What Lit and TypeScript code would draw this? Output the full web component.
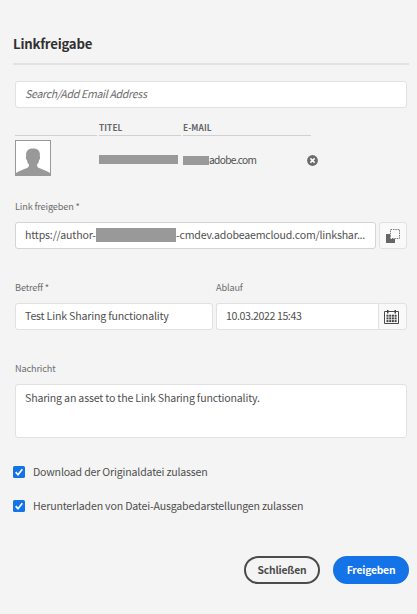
import { LitElement, html, css, svg } from "lit";
import { customElement } from "lit/decorators.js";

const dots = [0, 1, 2].flatMap((r) => [0, 1, 2, 3].map((c) => svg`<rect x=${2.5 + c * 2.7} y=${4.7 + r * 2.7} width="2" height="2"/>`));

@customElement("check-row")
class CheckRow extends LitElement {
  static styles = css`
    :host { display: flex; align-items: center; height: 34px; gap: 8px; }
    svg { display: block; width: 12px; height: 12px; flex: none; }
  `;
  render() {
    return html`<svg viewBox="0 0 12 12"><rect width="12" height="12" rx="1.6" fill="#1473e6"/><path d="M2.7 6.1 5 8.7 9.3 3.3" fill="none" stroke="#fff" stroke-width="1.7"/></svg><slot></slot>`;
  }
}

@customElement("app-root")
class AppRoot extends LitElement {
  static styles = css`
    :host {
      display: block; box-sizing: border-box; width: 417px; height: 614px; padding: 34px 8px 0 13px;
      background: #f4f4f4; color: #4f4f4f; overflow: hidden; white-space: nowrap;
      font: 10.6px/20px "Noto Sans CJK SC", "Noto Sans", sans-serif; letter-spacing: -0.18px;
    }
    * { box-sizing: border-box; }
    svg { display: block; }
    h1 { margin: 0; height: 31px; border-bottom: 2px solid #e2e2e2; font-size: 13.2px; line-height: 19px; font-weight: 700; color: #303030; letter-spacing: -0.22px; }
    .form { padding: 0 2px; }
    .field { height: 27px; display: flex; align-items: center; background: #fff; border: 1px solid #e1e1e1; border-radius: 3px; padding: 0 9px 1px; }
    .search { margin-top: 16px; font-style: italic; color: #6e6e6e; letter-spacing: -0.31px; }
    .people { display: grid; grid-template-columns: 82px 82px 128px; column-gap: 2px; margin-top: 9px; }
    .th { height: 19px; border-bottom: 1px solid #d0d0d0; font-size: 8.3px; font-weight: 700; line-height: 20px; color: #666; letter-spacing: 0.1px; }
    .person { display: flex; height: 36px; margin-top: 4px; align-items: center; }
    .avatar { width: 36px; height: 36px; }
    .mask { background: #999; flex: none; }
    .name { width: 79px; height: 9px; margin: 2px 0 0 48px; }
    .mail { display: flex; align-items: center; margin: 4px 0 0 5px; width: 124px; font-size: 10.2px; letter-spacing: -0.7px; }
    .mail .mask { width: 26px; height: 9px; }
    .remove { width: 11px; height: 11px; margin-top: 5px; }
    .label { font-size: 9.2px; line-height: 18px; height: 18px; color: #6e6e6e; letter-spacing: -0.16px; }
    .row { display: flex; gap: 3px; margin-top: 7px; }
    .link-label { margin-top: 21px; }
    .labels, .message-label { margin-top: 29px; }
    .link { width: 361px; border-color: #d4d4d4; }
    .link .mask { width: 80px; height: 14px; }
    .host { width: 71px; letter-spacing: -0.17px; }
    .path { letter-spacing: -0.2px; }
    .tool { width: 28px; height: 27px; display: grid; place-items: center; background: #f9f9f9; border: 1px solid #e1e1e1; border-radius: 3px; }
    .subject { width: 198px; }
    .date { width: 162px; border-right: 0; border-radius: 3px 0 0 3px; letter-spacing: -0.4px; }
    .date + .tool { width: 29px; padding-right: 2px; border-radius: 0 3px 3px 0; }
    .pair { display: flex; }
    .message { height: 54px; margin-top: 7px; align-items: flex-start; padding-top: 3px; }
    .checks { margin-top: 17px; }
    .actions { display: flex; justify-content: flex-end; gap: 13px; margin-top: 33px; }
    .btn { width: 76px; height: 28px; border-radius: 14px; border: 2px solid #4b4b4b; font: 700 10.3px/22px "Noto Sans CJK SC", sans-serif; letter-spacing: -0.2px; padding: 0; background: none; color: #4b4b4b; text-align: center; }
    .cta { background: #1473e6; border-color: #1473e6; color: #fff; }
  `;
  render() {
    return html`
      <h1>Linkfreigabe</h1>
      <div class="form">
        <div class="field search">Search/Add Email Address</div>
        <div class="people"><div class="th"></div><div class="th">TITEL</div><div class="th">E-MAIL</div></div>
        <div class="person">
          <svg class="avatar" viewBox="0 0 36 36"><rect x=".5" y=".5" width="35" height="35" fill="#fff" stroke="#999"/><path d="M1 35v-2c3-2.500 8-3.500 11-5 1.500-.8 2-1.500 2-3.500-1.200-1-1.800-2.500-2-4.500-1-.5-1.500-2.500-.8-4C10.500 11 13 8.500 18 8.500s7.500 2.500 6.800 7.500c.7 1.500.2 3.500-.8 4-.2 2-.8 3.500-2 4.500 0 2 .5 2.700 2 3.500 3 1.500 8 2.500 11 5v2z" fill="#999"/></svg>
          <span class="mask name"></span>
          <span class="mail"><span class="mask"></span>adobe.com</span>
          <svg class="remove" viewBox="0 0 11 11"><circle cx="5.5" cy="5.5" r="5.4" fill="#6c6c6c"/><path d="m3.4 3.4 4.2 4.2m0-4.2-4.2 4.2" stroke="#fff" stroke-width="1.5"/></svg>
        </div>
        <div class="label link-label">Link freigeben *</div>
        <div class="row">
          <div class="field link"><span class="host">https://author-</span><span class="mask"></span><span class="path">-cmdev.adobeaemcloud.com/linkshar...</span></div>
          <div class="tool"><svg width="14" height="14" viewBox="0 0 14 14"><path d="M0 5h4v5h5v4H0z" fill="#666"/><rect x="4.5" y=".5" width="9" height="9" fill="#fff" stroke="#777" stroke-dasharray="1.5 .9"/></svg></div>
        </div>
        <div class="row labels"><div class="label subject">Betreff *</div><div class="label">Ablauf</div></div>
        <div class="row">
          <div class="field subject">Test Link Sharing functionality</div>
          <div class="pair"><div class="field date">10.03.2022 15:43</div>
          <div class="tool"><svg width="15" height="14" viewBox="0 0 15 14" fill="#444"><path d="M.5 1.500h14v12H.5z" fill="#fff" stroke="#4b4b4b"/><path d="M3 0h1.500v3.500H3zM10.500 0H12v3.500h-1.500z"/>${dots}</svg></div></div>
        </div>
        <div class="label message-label">Nachricht</div>
        <div class="field message">Sharing an asset to the Link Sharing functionality.</div>
      </div>
      <div class="checks">
        <check-row>Download der Originaldatei zulassen</check-row>
        <check-row>Herunterladen von Datei-Ausgabedarstellungen zulassen</check-row>
      </div>
      <div class="actions"><button class="btn">Schließen</button><button class="btn cta">Freigeben</button></div>
    `;
  }
}
